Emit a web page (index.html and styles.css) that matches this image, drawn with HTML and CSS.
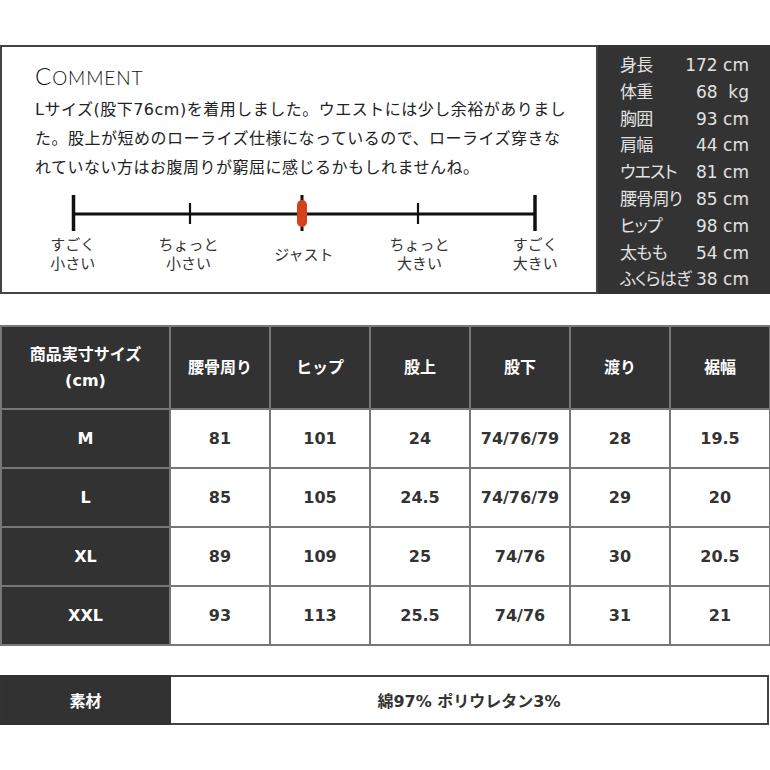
FILE: index.html
```html
<!DOCTYPE html>
<html lang="ja">
<head>
<meta charset="utf-8">
<title>Size</title>
<link rel="stylesheet" href="styles.css">
</head>
<body>
<div class="top">
  <section class="comment">
    <h2 class="title"><span class="cap">C</span>OMMENT</h2>
    <p class="text">Lサイズ(股下76cm)を着用しました。ウエストには少し余裕がありまし<br>た。股上が短めのローライズ仕様になっているので、ローライズ穿きな<br>れていない方はお腹周りが窮屈に感じるかもしれませんね。</p>
    <div class="scale">
      <svg class="scale-line" width="593" height="40" viewBox="0 0 593 40">
        <line x1="71" y1="21" x2="533" y2="21" stroke="#111" stroke-width="3"/>
        <line x1="71.5" y1="2" x2="71.5" y2="38" stroke="#111" stroke-width="3.5"/>
        <line x1="188" y1="10" x2="188" y2="31" stroke="#111" stroke-width="2.2"/>
        <line x1="416" y1="10" x2="416" y2="31" stroke="#111" stroke-width="2.2"/>
        <line x1="533" y1="2" x2="533" y2="38" stroke="#111" stroke-width="3.5"/>
        <line x1="300" y1="2" x2="300" y2="38" stroke="#111" stroke-width="3"/>
        <rect x="295" y="7" width="10" height="27" rx="5" fill="#d8401d"/>
      </svg>
      <div class="labels">
        <div class="label">すごく<br>小さい</div>
        <div class="label">ちょっと<br>小さい</div>
        <div class="label">ジャスト</div>
        <div class="label">ちょっと<br>大きい</div>
        <div class="label">すごく<br>大きい</div>
      </div>
    </div>
  </section>
  <aside class="profile">
    <div class="row"><span class="k">身長</span><span class="v">172 cm</span></div>
    <div class="row"><span class="k">体重</span><span class="v">68  kg</span></div>
    <div class="row"><span class="k">胸囲</span><span class="v">93 cm</span></div>
    <div class="row"><span class="k">肩幅</span><span class="v">44 cm</span></div>
    <div class="row"><span class="k">ウエスト</span><span class="v">81 cm</span></div>
    <div class="row"><span class="k">腰骨周り</span><span class="v">85 cm</span></div>
    <div class="row"><span class="k">ヒップ</span><span class="v">98 cm</span></div>
    <div class="row"><span class="k">太もも</span><span class="v">54 cm</span></div>
    <div class="row"><span class="k">ふくらはぎ</span><span class="v">38 cm</span></div>
  </aside>
</div>

<table class="sizes">
  <colgroup>
    <col class="c-first"><col class="c"><col class="c"><col class="c"><col class="c"><col class="c"><col class="c">
  </colgroup>
  <thead>
    <tr class="head">
      <th>商品実寸サイズ<br>(cm)</th><th>腰骨周り</th><th>ヒップ</th><th>股上</th><th>股下</th><th>渡り</th><th>裾幅</th>
    </tr>
  </thead>
  <tbody>
    <tr><th>M</th><td>81</td><td>101</td><td>24</td><td>74/76/79</td><td>28</td><td>19.5</td></tr>
    <tr><th>L</th><td>85</td><td>105</td><td>24.5</td><td>74/76/79</td><td>29</td><td>20</td></tr>
    <tr><th>XL</th><td>89</td><td>109</td><td>25</td><td>74/76</td><td>30</td><td>20.5</td></tr>
    <tr><th>XXL</th><td>93</td><td>113</td><td>25.5</td><td>74/76</td><td>31</td><td>21</td></tr>
  </tbody>
</table>

<table class="material">
  <tr><th>素材</th><td>綿97% ポリウレタン3%</td></tr>
</table>
</body>
</html>
```

FILE: styles.css
```css
* { box-sizing: border-box; }
html, body { margin: 0; padding: 0; background: #fff; }
body {
  width: 770px;
  font-family: "DejaVu Sans", "Noto Sans CJK JP", sans-serif;
  color: #222;
}

.top {
  margin-top: 45px;
  height: 249px;
  display: flex;
}

.comment {
  width: 598px;
  border: 2px solid #444;
  display: flex;
  flex-direction: column;
}

.title {
  margin: 17px 0 0 33px;
  font-family: "Lato", "DejaVu Sans", sans-serif;
  font-weight: 300;
  font-size: 19px;
  line-height: 24px;
  letter-spacing: 0.9px;
  color: #111;
}
.title .cap { font-size: 24px; }

.text {
  margin: 5px 0 0 33px;
  font-size: 16px;
  line-height: 29px;
  letter-spacing: 0.5px;
  white-space: nowrap;
  color: #222;
}

.scale {
  margin-top: 11px;
  display: flex;
  flex-direction: column;
}
.scale-line { display: block; }

.labels {
  margin: 3px 0 0 13px;
  width: 578px;
  display: grid;
  grid-template-columns: repeat(5, 1fr);
  align-items: center;
}
.label {
  text-align: center;
  font-size: 15px;
  line-height: 19px;
  color: #333;
}

.profile {
  flex: 1;
  background: #333;
  padding: 7px 21px 0 22px;
  display: flex;
  flex-direction: column;
}
.row {
  display: flex;
  justify-content: space-between;
  height: 26.8px;
  line-height: 26.8px;
  font-size: 17px;
  color: #e2e2e2;
  white-space: nowrap;
}
.row .k { font-feature-settings: "palt"; letter-spacing: -0.8px; }
.row .v { white-space: pre; }

.sizes {
  margin-top: 31px;
  border-collapse: collapse;
  table-layout: fixed;
  width: 770px;
}
.c-first { width: 169px; }
.c { width: 100px; }
.sizes th, .sizes td {
  border: 2px solid #777;
  text-align: center;
  font-weight: 700;
  font-size: 16px;
  padding: 0;
}
.sizes th {
  background: #323232;
  color: #fff;
}
.sizes .head th {
  height: 83px;
  line-height: 26px;
}
.sizes tbody tr { height: 59px; }
.sizes td {
  background: #fff;
  color: #333;
}

.material {
  margin-top: 29px;
  border-collapse: collapse;
  table-layout: fixed;
  width: 769px;
}
.material th {
  width: 169px;
  height: 48px;
  background: #323232;
  color: #fff;
  font-size: 16px;
  font-weight: 700;
  border: 2px solid #333;
}
.material td {
  border: 2px solid #444;
  text-align: center;
  font-size: 16px;
  font-weight: 700;
  color: #333;
}
```
